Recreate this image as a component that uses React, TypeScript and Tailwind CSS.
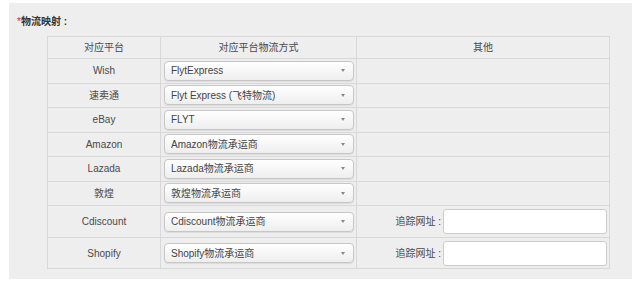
const rows = [
  { platform: 'Wish', method: 'FlytExpress' },
  { platform: '速卖通', method: 'Flyt Express (飞特物流)' },
  { platform: 'eBay', method: 'FLYT' },
  { platform: 'Amazon', method: 'Amazon物流承运商' },
  { platform: 'Lazada', method: 'Lazada物流承运商' },
  { platform: '敦煌', method: '敦煌物流承运商' },
  { platform: 'Cdiscount', method: 'Cdiscount物流承运商', tracking: true },
  { platform: 'Shopify', method: 'Shopify物流承运商', tracking: true },
]

function FakeSelect({ value }: { value: string }) {
  return (
    <div className="flex items-center justify-between w-[190px] h-[20px] pl-[6px] pr-[8px] rounded-[4px] border border-[#c6c6c6] bg-gradient-to-b from-white to-[#eeeeee] shadow-[0_1px_1px_rgba(0,0,0,0.08)] text-[#444]">
      <span className="truncate">{value}</span>
      <span className="w-0 h-0 border-l-[2.5px] border-r-[2.5px] border-t-[3px] border-l-transparent border-r-transparent border-t-[#888]" />
    </div>
  )
}

export default function App() {
  return (
    <div className="w-[640px] h-[288px] bg-white pt-[3px] pl-[9px] font-['Liberation_Sans','Noto_Sans_CJK_SC',sans-serif] text-[10px] text-[#4a4a4a]">
      <div className="w-[623px] h-[276px] bg-[#eeeeee]">
        <div className="h-[33px] pl-[8px] pt-[13px] font-bold text-[#333] leading-[12px]">
          <span className="text-[#e02020] font-normal">*</span>物流映射 :
        </div>
        <table className="ml-[38px] border-collapse w-[562px] table-fixed">
          <colgroup>
            <col className="w-[113px]" />
            <col className="w-[196px]" />
            <col className="w-[253px]" />
          </colgroup>
          <thead>
            <tr className="h-[22px]">
              <th className="border border-[#d8d8d8] font-normal text-center">对应平台</th>
              <th className="border border-[#d8d8d8] font-normal text-center">对应平台物流方式</th>
              <th className="border border-[#d8d8d8] font-normal text-center">其他</th>
            </tr>
          </thead>
          <tbody>
            {rows.map(r => (
              <tr
                key={r.platform}
                className={r.tracking ? (r.platform === 'Cdiscount' ? 'h-[32px]' : 'h-[31px]') : 'h-[24.5px]'}
              >
                <td className="border border-[#d8d8d8] text-center">{r.platform}</td>
                <td className="border border-[#d8d8d8] pl-[3px] py-0">
                  <FakeSelect value={r.method} />
                </td>
                <td className="border border-[#d8d8d8] py-0">
                  {r.tracking && (
                    <div className="flex items-center justify-end pr-[2px]">
                      <span className="mr-[2px]">追踪网址 :</span>
                      <div className="w-[164px] h-[25px] bg-white border border-[#cccccc] rounded-[3px]" />
                    </div>
                  )}
                </td>
              </tr>
            ))}
          </tbody>
        </table>
      </div>
    </div>
  )
}
